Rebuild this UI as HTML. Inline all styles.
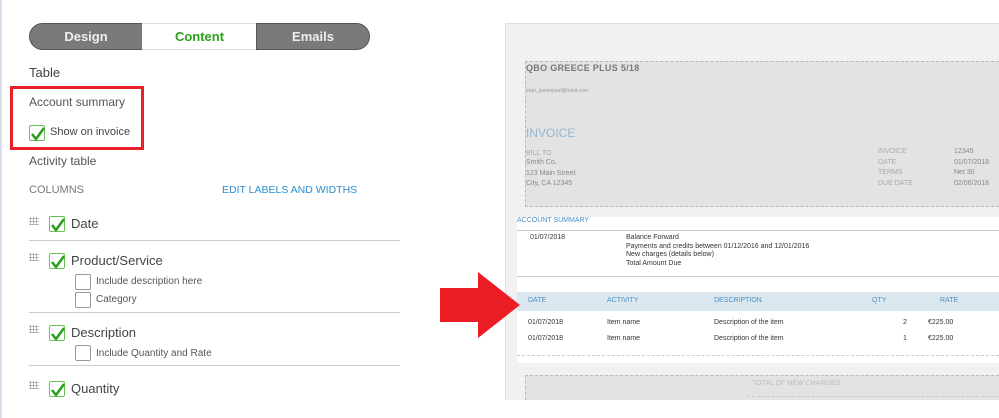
<!DOCTYPE html>
<html><head><meta charset="utf-8"><style>
*{margin:0;padding:0;box-sizing:border-box}
body{width:999px;height:418px;overflow:hidden;background:#fff;font-family:"Liberation Sans",Arial,sans-serif;position:relative}
.a{position:absolute;white-space:nowrap}
.seg{position:absolute;top:23px;height:27px;font-size:13px;font-weight:bold;text-align:center;line-height:26px}
.cb{position:absolute;width:16px;height:16px;border:1px solid #6cbf5a;border-radius:2px;background:#fff}
.cb svg{position:absolute;left:0;top:0}
.ub{position:absolute;width:16px;height:16px;border:1px solid #999;border-radius:2px;background:#fff}
.grip{position:absolute;width:10px;height:8px;background-image:radial-gradient(circle,#888 0.8px,transparent 1px);background-size:3px 3px}
.hr{position:absolute;left:29px;width:371px;height:1px;background:#ccc}
.t{color:#444;font-size:13px}
.s{color:#555;font-size:10px}
.iv{font-size:7px;color:#333}
.g{font-size:7px;color:#aaa}
</style></head><body>
<div class="a" style="left:0;top:0;width:2px;height:418px;background:#d8dcec"></div>
<div class="seg" style="left:29px;width:114px;background:#7a7a7a;color:#eee;border-radius:14px 0 0 14px;border:1px solid #555">Design</div>
<div class="seg" style="left:142px;width:115px;background:#fff;color:#2ca01c;border-top:1px solid #ddd;border-bottom:1px solid #ddd">Content</div>
<div class="seg" style="left:256px;width:114px;background:#7a7a7a;color:#eee;border-radius:0 14px 14px 0;border:1px solid #555">Emails</div>
<div class="a t" style="left:29px;top:65px">Table</div>
<div class="a" style="left:10px;top:86px;width:134px;height:64px;border:3px solid #e8202a"></div>
<div class="a" style="left:29px;top:95px;font-size:12px;color:#555">Account summary</div>
<div class="cb" style="left:29px;top:125px"><svg width="16" height="16"><path d="M2 8 L6 13 L14 2" stroke="#2ca01c" stroke-width="2.6" fill="none"/></svg></div>
<div class="a" style="left:50px;top:126px;font-size:11px;color:#444">Show on invoice</div>
<div class="a" style="left:29px;top:154px;font-size:12px;color:#555">Activity table</div>
<div class="a" style="left:29px;top:184px;font-size:11px;color:#777">COLUMNS</div>
<div class="a" style="left:222px;top:184px;font-size:10.5px;color:#2a8ed1">EDIT LABELS AND WIDTHS</div>

<div class="grip" style="left:29px;top:217px"></div>
<div class="cb" style="left:49px;top:216px"><svg width="16" height="16"><path d="M2 8 L6 13 L14 2" stroke="#2ca01c" stroke-width="2.6" fill="none"/></svg></div>
<div class="a t" style="left:71px;top:216px">Date</div>
<div class="hr" style="top:240px"></div>

<div class="grip" style="left:29px;top:253px"></div>
<div class="cb" style="left:49px;top:253px"><svg width="16" height="16"><path d="M2 8 L6 13 L14 2" stroke="#2ca01c" stroke-width="2.6" fill="none"/></svg></div>
<div class="a t" style="left:71px;top:253px">Product/Service</div>
<div class="ub" style="left:75px;top:274px"></div>
<div class="a s" style="left:96px;top:276px">Include description here</div>
<div class="ub" style="left:75px;top:292px"></div>
<div class="a s" style="left:96px;top:294px">Category</div>
<div class="hr" style="top:312px"></div>

<div class="grip" style="left:29px;top:325px"></div>
<div class="cb" style="left:49px;top:325px"><svg width="16" height="16"><path d="M2 8 L6 13 L14 2" stroke="#2ca01c" stroke-width="2.6" fill="none"/></svg></div>
<div class="a t" style="left:71px;top:325px">Description</div>
<div class="ub" style="left:75px;top:345px"></div>
<div class="a s" style="left:96px;top:348px">Include Quantity and Rate</div>
<div class="hr" style="top:365px"></div>

<div class="grip" style="left:29px;top:381px"></div>
<div class="cb" style="left:49px;top:381px"><svg width="16" height="16"><path d="M2 8 L6 13 L14 2" stroke="#2ca01c" stroke-width="2.6" fill="none"/></svg></div>
<div class="a t" style="left:71px;top:381px">Quantity</div>

<!-- preview -->
<div class="a" style="left:505px;top:23px;width:494px;height:377px;background:#f1f1f1;border-left:1px solid #ddd;border-top:1px solid #ddd"></div>
<div class="a" style="left:525px;top:61px;width:474px;height:146px;background:#e3e3e3;border:1px dashed #bbb;border-right:none"></div>
<div class="a" style="left:526px;top:63px;font-size:9px;font-weight:bold;color:#777;letter-spacing:.3px">QBO GREECE PLUS 5/18</div>
<div class="a" style="left:526px;top:88px;font-size:5px;color:#999">eran_jamespaul@intuit.com</div>
<div class="a" style="left:526px;top:126px;font-size:12px;color:#93b7d3">INVOICE</div>
<div class="a g" style="left:526px;top:148px;line-height:11px">BILL TO</div>
<div class="a" style="left:526px;top:158px;font-size:7px;color:#888;line-height:10.7px">Smith Co.<br>123 Main Street<br>City, CA 12345</div>
<div class="a g" style="left:878px;top:147px;line-height:10.7px">INVOICE<br>DATE<br>TERMS<br>DUE DATE</div>
<div class="a" style="left:954px;top:147px;font-size:7px;color:#888;line-height:10.7px">12345<br>01/07/2018<br>Net 30<br>02/06/2018</div>

<div class="a" style="left:517px;top:217px;width:482px;height:146px;background:#fff"></div>
<div class="a" style="left:517px;top:217px;font-size:7px;color:#4a8fc4">ACCOUNT SUMMARY</div>
<div class="a" style="left:517px;top:230px;width:482px;height:1px;background:#c5ccd6"></div>
<div class="a iv" style="left:530px;top:234px">01/07/2018</div>
<div class="a iv" style="left:626px;top:234px;line-height:8.5px">Balance Forward<br>Payments and credits between 01/12/2016 and 12/01/2016<br>New charges (details below)<br>Total Amount Due</div>
<div class="a" style="left:517px;top:276px;width:482px;height:1px;background:#c5ccd6"></div>
<div class="a" style="left:517px;top:292px;width:482px;height:19px;background:#dce8f0"></div>
<div class="a" style="left:528px;top:297px;font-size:7px;color:#4a8fc4">DATE</div>
<div class="a" style="left:607px;top:297px;font-size:7px;color:#4a8fc4">ACTIVITY</div>
<div class="a" style="left:714px;top:297px;font-size:7px;color:#4a8fc4">DESCRIPTION</div>
<div class="a" style="left:872px;top:297px;font-size:7px;color:#4a8fc4">QTY</div>
<div class="a" style="left:940px;top:297px;font-size:7px;color:#4a8fc4">RATE</div>
<div class="a iv" style="left:528px;top:319px">01/07/2018</div>
<div class="a iv" style="left:607px;top:319px">Item name</div>
<div class="a iv" style="left:714px;top:319px">Description of the item</div>
<div class="a iv" style="left:903px;top:319px">2</div>
<div class="a iv" style="left:928px;top:319px">€225.00</div>
<div class="a iv" style="left:528px;top:335px">01/07/2018</div>
<div class="a iv" style="left:607px;top:335px">Item name</div>
<div class="a iv" style="left:714px;top:335px">Description of the item</div>
<div class="a iv" style="left:903px;top:335px">1</div>
<div class="a iv" style="left:928px;top:335px">€225.00</div>
<div class="a" style="left:517px;top:355px;width:482px;border-top:1px dashed #ccc"></div>
<div class="a" style="left:525px;top:375px;width:474px;height:25px;background:#e3e3e3;border:1px dashed #bbb;border-bottom:none;border-right:none"></div>
<div class="a" style="left:752px;top:380px;font-size:7px;color:#bbb">TOTAL OF NEW CHARGES</div>
<div class="a" style="left:747px;top:396px;width:252px;border-top:1px dashed #ccc"></div>

<svg class="a" style="left:438px;top:270px" width="84" height="70"><polygon points="2,18 40,18 40,2 82,35 40,68 40,52 2,52" fill="#ec1c24"/></svg>
</body></html>
